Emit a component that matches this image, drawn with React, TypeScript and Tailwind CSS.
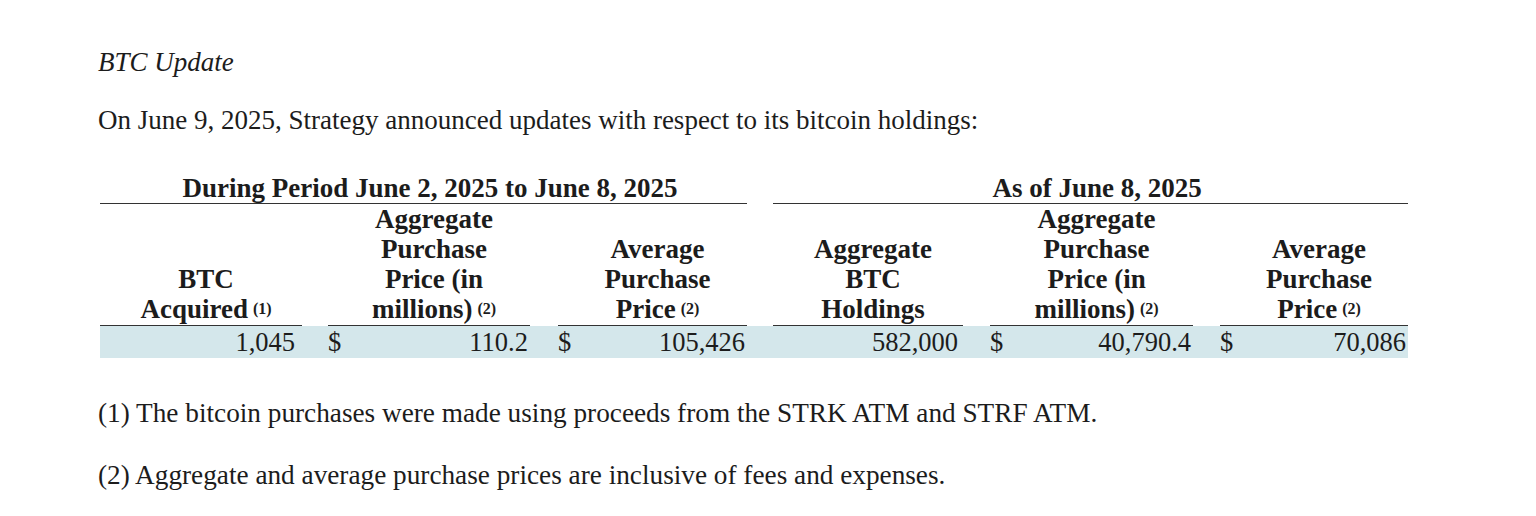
const serif = { fontFamily: '"Liberation Serif", "Times New Roman", serif' };

const cols = [202, 26, 202, 28, 189, 26, 190, 27, 203, 27, 188];

function Sup({ n }: { n: string }) {
  return <sup className="text-[16px] ml-[5px] relative -top-[4px]">({n})</sup>;
}

function ColHead({ lines, note }: { lines: string[]; note?: string }) {
  return (
    <th className="align-bottom border-b-[1.5px] border-[#333] p-0 pl-[10px] pb-[1px] text-center font-bold leading-[30px]">
      {lines.map((l, i) => (
        <div key={i}>
          {l}
          {i === lines.length - 1 && note ? <Sup n={note} /> : null}
        </div>
      ))}
    </th>
  );
}

function Money({ value }: { value: string }) {
  return (
    <td className="p-0">
      <div className="flex justify-between pr-[2px]">
        <span>$</span>
        <span>{value}</span>
      </div>
    </td>
  );
}

export default function App() {
  return (
    <div className="w-[1536px] h-[516px] bg-white text-[#1c1c1c] px-[98px] pt-[46px]" style={serif}>
      <p className="italic text-[27px] leading-[32px]">BTC Update</p>
      <p className="text-[27px] leading-[32px] mt-[26px]">
        On June 9, 2025, Strategy announced updates with respect to its bitcoin holdings:
      </p>

      <table className="mt-[38px] ml-[2px] border-collapse table-fixed text-[26.5px]" style={{ width: 1308 }}>
        <colgroup>
          {cols.map((w, i) => (
            <col key={i} style={{ width: w }} />
          ))}
        </colgroup>
        <thead>
          <tr>
            <th colSpan={5} className="p-0 pl-[13px] font-bold text-center text-[27px] leading-[29px] border-b-[1.5px] border-[#333]">
              During Period June 2, 2025 to June 8, 2025
            </th>
            <th className="p-0" />
            <th colSpan={5} className="p-0 pl-[13px] font-bold text-center text-[27px] leading-[29px] border-b-[1.5px] border-[#333]">
              As of June 8, 2025
            </th>
          </tr>
          <tr className="text-[27px]">
            <ColHead lines={['BTC', 'Acquired']} note="1" />
            <th className="p-0" />
            <ColHead lines={['Aggregate', 'Purchase', 'Price (in', 'millions)']} note="2" />
            <th className="p-0" />
            <ColHead lines={['Average', 'Purchase', 'Price']} note="2" />
            <th className="p-0" />
            <ColHead lines={['Aggregate', 'BTC', 'Holdings']} />
            <th className="p-0" />
            <ColHead lines={['Aggregate', 'Purchase', 'Price (in', 'millions)']} note="2" />
            <th className="p-0" />
            <ColHead lines={['Average', 'Purchase', 'Price']} note="2" />
          </tr>
        </thead>
        <tbody>
          <tr className="bg-[#d4e7eb] h-[32px] leading-[32px]">
            <td className="p-0 text-right pr-[7px]">1,045</td>
            <td className="p-0" />
            <Money value="110.2" />
            <td className="p-0" />
            <Money value="105,426" />
            <td className="p-0" />
            <td className="p-0 text-right pr-[5px]">582,000</td>
            <td className="p-0" />
            <Money value="40,790.4" />
            <td className="p-0" />
            <Money value="70,086" />
          </tr>
        </tbody>
      </table>

      <p className="text-[27.25px] leading-[32px] mt-[39px]">
        (1) The bitcoin purchases were made using proceeds from the STRK ATM and STRF ATM.
      </p>
      <p className="text-[27.25px] leading-[32px] mt-[30px]">
        (2) Aggregate and average purchase prices are inclusive of fees and expenses.
      </p>
    </div>
  );
}
